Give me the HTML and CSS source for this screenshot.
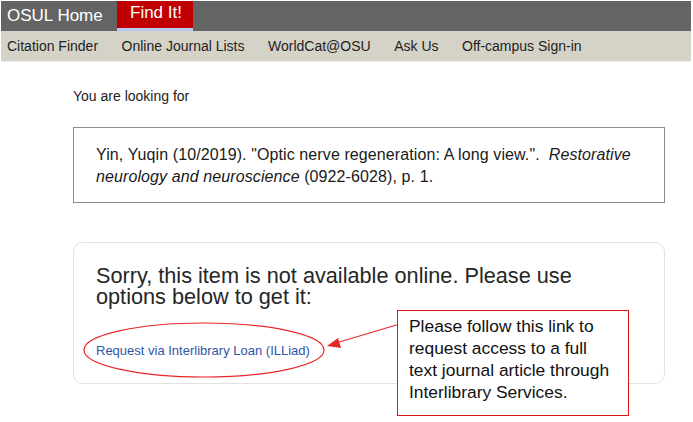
FILE: index.html
```html
<!DOCTYPE html>
<html>
<head>
<meta charset="utf-8">
<link rel="stylesheet" href="styles.css">
</head>
<body>
<div class="page">
  <header class="topbar">
    <a class="home">OSUL Home</a>
    <a class="tab">Find It!</a>
  </header>
  <nav class="subnav">
    <a>Citation Finder</a>
    <a>Online Journal Lists</a>
    <a>WorldCat@OSU</a>
    <a>Ask Us</a>
    <a>Off-campus Sign-in</a>
  </nav>
  <main class="main">
    <p class="intro">You are looking for</p>
    <div class="citation">Yin, Yuqin (10/2019). "Optic nerve regeneration: A long view.".&nbsp; <i>Restorative</i> <i>neurology and neuroscience</i> (0922-6028), p. 1.</div>
    <div class="sorry">
      <h2 class="sorry-title">Sorry, this item is not available online. Please use options below to get it:</h2>
      <a class="ill">Request via Interlibrary Loan (ILLiad)</a>
    </div>
  </main>
  <svg class="marks" width="693" height="422" viewBox="0 0 693 422">
    <ellipse cx="204" cy="350" rx="120" ry="27" fill="none" stroke="#e8262a" stroke-width="1.2"/>
    <line x1="403" y1="323" x2="336" y2="343" stroke="#e8262a" stroke-width="1.2"/>
    <polygon points="327,346 338,338 341,348" fill="#e8262a"/>
  </svg>
  <div class="callout">Please follow this link to<br>request access to a full<br>text journal article through<br>Interlibrary Services.</div>
</div>
</body>
</html>
```
FILE: styles.css
```css
html, body {
  margin: 0;
  padding: 0;
  background: #ffffff;
}
body {
  font-family: "Liberation Sans", Arial, sans-serif;
}
.page {
  position: relative;
  width: 693px;
  height: 422px;
  overflow: hidden;
  padding: 1px 2px 0 1px;
  box-sizing: border-box;
}
.topbar {
  display: flex;
  align-items: stretch;
  height: 30px;
  background: #646464;
}
.home {
  color: #ffffff;
  font-size: 17px;
  line-height: 30px;
  padding: 0 12px 0 6px;
  width: 98px;
}
.tab {
  background: #c00000;
  color: #ffffff;
  font-size: 17px;
  line-height: 24px;
  padding: 0 10px 0 13px;
  width: 53px;
  border-bottom: 3px solid #b8c8ee;
}
.subnav {
  display: flex;
  gap: 23.5px;
  height: 30px;
  align-items: center;
  background: #d5d3c7;
  padding-left: 6px;
  border-bottom: 1px solid #eeeeea;
}
.subnav a {
  font-size: 14px;
  color: #1e1e1e;
}
.main {
  margin-left: 72px;
  width: 592px;
}
.intro {
  margin: 26px 0 0 0;
  font-size: 14px;
  color: #222222;
  line-height: 16px;
}
.citation {
  margin-top: 23px;
  border: 1px solid #8c8c8c;
  padding: 16px 22px 14px 22px;
  font-size: 16px;
  line-height: 22px;
  letter-spacing: 0.1px;
  color: #1a1a1a;
}
.sorry {
  margin-top: 39px;
  border: 1px solid #e2e2e2;
  border-radius: 10px;
  padding: 22px 22px 24px 22px;
  height: 94px;
}
.sorry-title {
  margin: 0;
  font-weight: normal;
  font-size: 21.7px;
  line-height: 21px;
  color: #262626;
  width: 530px;
}
.ill {
  display: block;
  margin-top: 36px;
  font-size: 13px;
  color: #2f55a8;
}
.marks {
  position: absolute;
  left: 0;
  top: 0;
  pointer-events: none;
}
.callout {
  position: absolute;
  left: 397px;
  top: 310px;
  width: 208px;
  height: 94px;
  padding: 4px 11px 6px 11px;
  border: 1px solid #e0121a;
  background: #ffffff;
  font-size: 17.4px;
  line-height: 22px;
  color: #111111;
  white-space: nowrap;
}
```
